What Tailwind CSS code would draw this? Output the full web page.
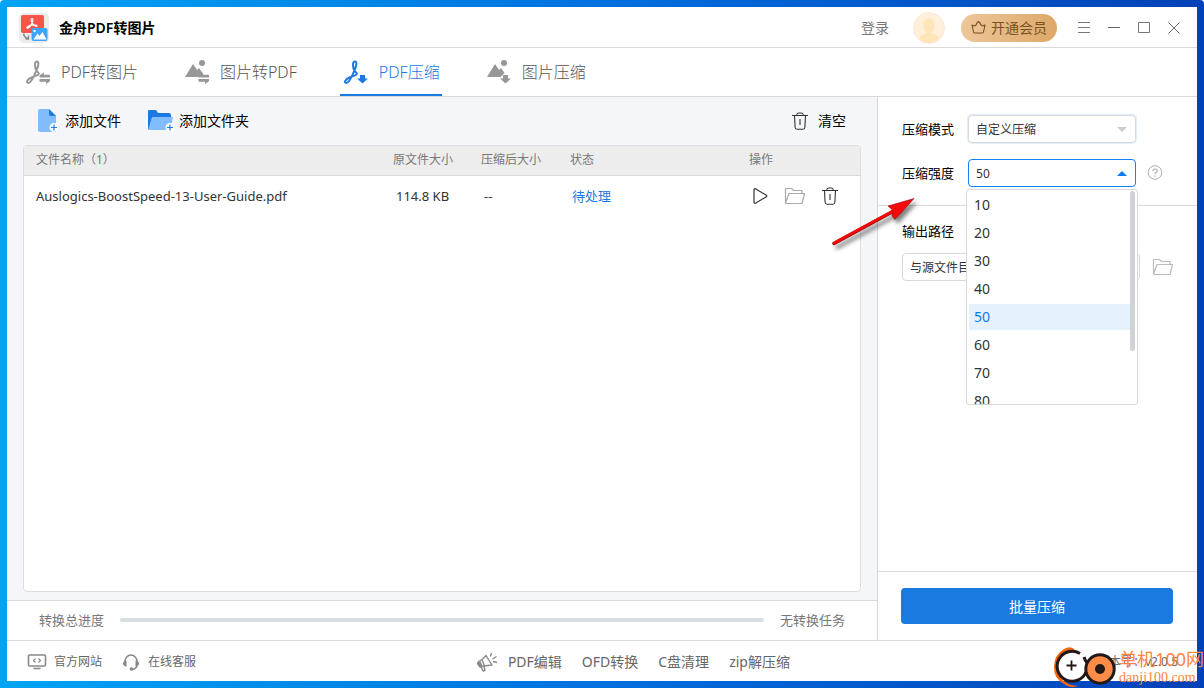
<!DOCTYPE html>
<html lang="zh-CN">
<head>
<meta charset="utf-8">
<title>金舟PDF转图片</title>
<meta name="viewport" content="width=device-width, initial-scale=1">
<script src="https://cdn.jsdelivr.net/npm/@tailwindcss/browser@4"></script>
</head>
<body class="bg-white font-['Noto_Sans','Noto_Sans_CJK_SC',sans-serif] text-[13px] leading-5 text-[#333]">
<svg class="hidden" aria-hidden="true">
  <symbol id="trash" viewBox="0 0 16 18"><path d="M0 3.500h16M4.500 3.500Q5 1 6.500 1h3q1.500 0 2 2.500M2.500 3.500l.6 11.700q.2 2 2 2h5.800q1.800 0 2-2l.6-11.700M8 7v6" fill="none" stroke="currentColor" stroke-width="1.100"/></symbol>
  <symbol id="folder" viewBox="0 0 22 18"><path d="M1.500 16V1.500h6l2 2h8.500V6M1.500 16l3.500-9.500h15.500l-2.500 10H2.500q-1 0-1-.8" fill="none" stroke="currentColor" stroke-width="1.200" stroke-linejoin="round"/></symbol>
  <symbol id="acrobat" viewBox="0 0 24 26"><path d="M11 2.500c2.200 0 1.500 4-.3 8.400C8.400 16.500 5 24 2.500 24c-3 0-1.500-3.800 3.500-5.800 3.200-1.200 6-1.700 7-3.200M11 2.500c-3 0-2.300 6.500-.3 9.500 1 1.500 2.300 2 2.300 3" fill="none" stroke="currentColor" stroke-width="2"/></symbol>
  <symbol id="photo" viewBox="0 0 24 26"><path d="M0 18L8 5l4.200 6 1.800-2 3.500 5-4 4z" fill="currentColor"/><circle cx="17" cy="4" r="3" fill="currentColor"/></symbol>
  <symbol id="swap" viewBox="0 0 24 26"><path d="M13.500 18.500v-2l4.500-3v2.200h6.500v2.800zM24.500 20v2L20 25v-2.300h-6.500V20z" fill="currentColor"/></symbol>
  <symbol id="down" viewBox="0 0 24 26"><path d="M16 16h5v3.500h3l-5.500 5-5.500-5h3z" fill="currentColor"/></symbol>
</svg>
<div class="relative flex min-h-screen flex-col rounded-t-[4px] bg-linear-to-r from-[#00a4f4] via-[#0070e0] to-[#0040b8] p-[7px]">
<div class="flex flex-1 flex-col bg-white">

  <header class="flex h-[41px] items-center border-b border-[#d9d9d9] pt-px pr-4 pl-3">
    <svg class="size-[30px]" viewBox="0 0 30 30"><rect width="30" height="30" rx="5" fill="#ececec"/><rect x="2" y="2" width="23" height="18" rx="2" fill="#f75549"/><path d="M13 5.500c1.800 0 .6 3.500-1 6.500-1 2-3 3.500-4 3s1.500-2.200 4.500-2.800 6 0 5.500 1-4-1.200-5-3.700-1.500-4 0-4z" fill="none" stroke="#fff" stroke-width="1.200"/><path d="M4.500 20.500q1 4.500 4.500 5M9.500 22.500v3.500H6.500" fill="none" stroke="#888" stroke-width="1.400"/><rect x="12.500" y="15" width="16" height="13" rx="2" fill="#3fa4fb"/><path d="M14.500 26.500l4-6 2 2.500 3-4 4 7.500z" fill="#fff"/><circle cx="15.500" cy="18" r="1.200" fill="#fff"/></svg>
    <h1 class="ml-[10px] text-sm font-semibold text-black">金舟PDF转图片</h1>
    <div class="ml-auto flex items-center">
      <a href="#" class="text-sm text-[#777]">登录</a>
      <svg class="ml-6 size-8" viewBox="0 0 32 32"><circle cx="16" cy="16" r="15.500" fill="#fff0d9" stroke="#fde6e0"/><ellipse cx="16" cy="13.500" rx="6" ry="7" fill="#ffe6ba"/><path d="M13.500 18h5v3l5 2q2.500 1 2.500 3.500Q22 31 16 31T6 26.500Q6 24 8.500 23l5-2z" fill="#ffe6ba"/></svg>
      <button class="ml-4 flex h-7 items-center gap-[5px] rounded-full bg-linear-to-r from-[#edc799] to-[#dda869] px-[10px] text-sm text-[#7a5220]">
        <svg class="size-[15px]" viewBox="0 0 15 15"><path d="M2.500 12L1 5q2.500 1.500 4 0 .5-2 2.500-3.500Q9.500 3 10 5q1.500 1.500 4 0l-1.500 7q-.2 1-1 1h-8q-.8 0-1-1z" fill="none" stroke="currentColor" stroke-width="1.100" stroke-linejoin="round"/></svg>开通会员</button>
      <button aria-label="菜单" class="ml-5 text-[#777]"><svg class="size-[14px]" viewBox="0 0 14 14"><path d="M1 1.500h12M1 6.500h12M1 11.500h12" stroke="currentColor"/></svg></button>
      <button aria-label="最小化" class="ml-4 text-[#666]"><svg class="size-[14px]" viewBox="0 0 14 14"><path d="M1 6.500h12" stroke="currentColor"/></svg></button>
      <button aria-label="最大化" class="ml-4 text-[#777]"><svg class="size-[14px]" viewBox="0 0 14 14"><path d="M1.500 1.500h11v10h-11z" fill="none" stroke="currentColor"/></svg></button>
      <button aria-label="关闭" class="ml-4 text-[#666]"><svg class="size-[14px]" viewBox="0 0 14 14"><path d="M1.500 1.500l11 11M12.500 1.500l-11 11" stroke="currentColor"/></svg></button>
    </div>
  </header>

  <nav class="flex h-[49px] gap-[41px] border-b border-[#d9d9d9] pl-[15px] text-base font-light text-[#555]">
    <a href="#" class="flex items-center gap-[11px] pr-[2px] pl-1"><svg class="h-[26px] w-6 text-[#979797]"><use href="#acrobat"/><use href="#swap"/></svg>PDF转图片</a>
    <a href="#" class="flex items-center gap-[11px] pr-[2px] pl-1"><svg class="h-[26px] w-6 text-[#979797]"><use href="#photo"/><use href="#swap"/></svg>图片转PDF</a>
    <a href="#" aria-current="page" class="flex items-center gap-[11px] border-b-2 border-[#1a7ae2] pt-[2px] pr-[2px] pl-1 text-[#1a7ae2]"><svg class="h-[26px] w-6"><use href="#acrobat"/><use href="#down"/></svg>PDF压缩</a>
    <a href="#" class="flex items-center gap-[11px] pr-[2px] pl-1"><svg class="h-[26px] w-6 text-[#979797]"><use href="#photo"/><use href="#down"/></svg>图片压缩</a>
  </nav>

  <div class="flex flex-1">
    <main class="flex flex-1 flex-col">
      <div class="flex flex-1 flex-col bg-[#f4f6fa] px-4 pb-2">
        <div class="flex h-12 items-center pr-[15px] pl-[14px] text-sm text-black">
          <button class="flex items-center gap-2"><svg class="h-6 w-5" viewBox="0 0 20 24"><path d="M3 0h9l7 7v16H3q-2 0-2-2V2q0-2 2-2z" fill="#80bcff"/><path d="M12 0l7 7h-5q-2 0-2-2z" fill="#1a7ae2"/><circle cx="17" cy="18.500" r="4.500" fill="#fff"/><path d="M14 18.500h6M17 15.500v6" stroke="#1a7ae2" stroke-width="1.200"/></svg>添加文件</button>
          <button class="ml-[26px] flex items-center gap-[5px]"><svg class="h-6 w-[27px]" viewBox="0 0 27 24"><path d="M1 2q0-1 1-1h7l2 3h11q2 0 2 2v14H1z" fill="#1a7ae2"/><path d="M5 8h21l-2.500 12q-.3 1-1.500 1H1z" fill="#80bcff"/><circle cx="23" cy="18.500" r="4.500" fill="#fff"/><path d="M20 18.500h6M23 15.500v6" stroke="#1a7ae2" stroke-width="1.200"/></svg>添加文件夹</button>
          <button class="ml-auto flex items-center gap-[10px]"><svg class="h-[18px] w-4 text-[#333]"><use href="#trash"/></svg>清空</button>
        </div>
        <div class="flex-1 rounded-[4px] border border-[#dcdfe2] bg-white">
          <table class="w-full table-fixed text-left">
            <thead class="text-xs text-[#777]">
              <tr class="h-[29px] border-b border-[#d9d9d9] bg-[#ededed]">
                <th class="pl-3 font-normal">文件名称（1）</th><th class="w-[88px] font-normal">原文件大小</th><th class="w-[89px] font-normal">压缩后大小</th><th class="w-[179px] font-normal">状态</th><th class="w-[111px] font-normal">操作</th>
              </tr>
            </thead>
            <tbody>
              <tr class="h-[41px]">
                <td class="pl-3">Auslogics-BoostSpeed-13-User-Guide.pdf</td><td class="pl-[3px]">114.8 KB</td><td class="pl-[3px]">--</td><td class="pl-[2px] text-[#1a7ae2]">待处理</td>
                <td><div class="flex items-center gap-4 pl-[3px]">
                  <button aria-label="开始"><svg class="h-[18px] w-4" viewBox="0 0 16 18"><path d="M2 3v12q0 2 1.800 1L14 10q1.700-1 0-2L3.800 2Q2 1 2 3z" fill="none" stroke="currentColor" stroke-width="1.200"/></svg></button>
                  <button aria-label="打开文件夹" class="text-[#aaa]"><svg class="h-[18px] w-[22px]"><use href="#folder"/></svg></button>
                  <button aria-label="删除"><svg class="h-[18px] w-4"><use href="#trash"/></svg></button>
                </div></td>
              </tr>
            </tbody>
          </table>
        </div>
      </div>
      <div class="flex h-10 items-center gap-4 border-t border-[#d9d9d9] pr-8 pb-[2px] pl-8 text-[#777]">
        <span id="total">转换总进度</span>
        <div role="progressbar" aria-labelledby="total" aria-valuenow="0" class="h-1 flex-1 rounded-full bg-[#d8dfe3]"></div>
        <span>无转换任务</span>
      </div>
    </main>

    <aside class="flex w-[320px] flex-col border-l border-[#d9d9d9]">
      <div class="flex flex-col gap-4 border-b border-[#d9d9d9] py-[18px] pl-6 text-black">
        <div class="flex items-center gap-[14px]">
          <label for="mode">压缩模式</label>
          <div class="relative">
            <select id="mode" class="h-7 w-[168px] appearance-none rounded-[4px] border border-[#d9d9d9] bg-white px-[7px] pt-[2px] text-xs text-[#333] ring-1 ring-[#e1effd]"><option>自定义压缩</option></select>
            <svg class="pointer-events-none absolute top-3 right-[9px] h-[5px] w-[10px]" viewBox="0 0 10 5"><path d="M0 0h10L5 5z" fill="#ccc"/></svg>
          </div>
        </div>
        <div class="flex items-center gap-[14px]">
          <label for="level">压缩强度</label>
          <div class="relative">
            <select id="level" class="block h-7 w-[168px] appearance-none rounded-[4px] border border-[#1283f5] bg-white px-[7px] pt-[2px] text-xs text-[#333]"><option>50</option></select>
            <svg class="pointer-events-none absolute top-3 right-[9px] h-[5px] w-[10px]" viewBox="0 0 10 5"><path d="M0 5h10L5 0z" fill="#0a7bf2"/></svg>
            <ul role="listbox" aria-label="压缩强度" class="absolute top-[30px] -left-[2px] z-10 h-[216px] w-[172px] overflow-hidden rounded-[3px] border border-[#d9d9d9] bg-white pt-px pr-[7px] pl-[2px] text-sm leading-7 text-[#333]">
              <li role="option" class="px-[5px]">10</li><li role="option" class="px-[5px]">20</li><li role="option" class="px-[5px]">30</li><li role="option" class="px-[5px]">40</li>
              <li role="option" aria-selected="true" class="rounded-[2px] border-y border-white bg-[#e6f1fe] px-[5px] leading-[26px] text-[#0a7bf2]">50</li>
              <li role="option" class="px-[5px]">60</li><li role="option" class="px-[5px]">70</li><li role="option" class="px-[5px]">80</li>
              <li aria-hidden="true" class="absolute top-px right-[2px] h-[160px] w-[5px] rounded-full bg-[#cfd3d7]"></li>
            </ul>
          </div>
          <button aria-label="帮助" class="-ml-[3px] text-[#aaa]"><svg class="size-4" viewBox="0 0 16 16"><circle cx="8" cy="7.500" r="6.800" fill="none" stroke="currentColor"/><path d="M5.800 6q0-2 2.200-2t2.200 1.800q0 1-1.200 1.700Q8 8.100 8 9.300M8 10.500v1.200" fill="none" stroke="currentColor" stroke-width="1.100"/></svg></button>
        </div>
      </div>
      <div class="flex flex-1 flex-col gap-3 pt-[15px] pl-6 text-black">
        <label for="path">输出路径</label>
        <div class="flex items-center gap-3">
          <select id="path" class="h-7 w-[238px] appearance-none rounded-[4px] border border-[#d9d9d9] bg-white px-[7px] pt-[2px] text-xs text-[#333]"><option>与源文件目录相同</option></select>
          <button aria-label="选择文件夹" class="text-[#bbb]"><svg class="h-[18px] w-[22px]"><use href="#folder"/></svg></button>
        </div>
      </div>
      <div class="border-t border-[#d9d9d9] pt-4 pr-6 pb-4 pl-[23px]">
        <button class="h-9 w-full rounded-[4px] bg-[#1a7ae2] pt-px text-sm text-white">批量压缩</button>
      </div>
    </aside>
  </div>

  <footer class="grid h-[41px] grid-cols-[39%_1fr_auto] items-center border-t border-[#d9d9d9] pt-px pr-[19px] pl-5 text-[#666]">
    <div class="flex items-center gap-5 text-xs">
      <a href="#" class="flex items-center gap-[7px]"><svg class="h-[18px] w-5" viewBox="0 0 20 18"><path d="M2.500 2h15q1 0 1 1v9q0 1-1 1h-15q-1 0-1-1V3q0-1 1-1zM6.500 15.500h7" fill="none" stroke="#888" stroke-width="1.600"/><path d="M8.500 5.500l-2 2 2 2M11.500 5.500l2 2-2 2" fill="none" stroke="#888" stroke-width="1.200"/></svg>官方网站</a>
      <a href="#" class="flex items-center gap-2"><svg class="size-[18px]" viewBox="0 0 18 18"><path d="M3 8.500a6 6.500 0 0 1 12 0M15 13q-1 3-5 3.300" fill="none" stroke="#888" stroke-width="1.500"/><path d="M4.500 7.500v6Q1 13 1 10.500t3.500-3zM13.500 7.500v6q3.500-.5 3.500-3t-3.500-3z" fill="#888"/><circle cx="9.500" cy="16" r="1.800" fill="#888"/></svg>在线客服</a>
    </div>
    <div class="flex items-center gap-5 text-sm">
      <a href="#" class="flex items-center gap-[10px]"><svg class="h-5 w-[22px]" viewBox="0 0 22 20"><path d="M10 3.500l6 9.500-8 1-4 1-2.500-3.500 1-2L6 7.500zM6 7.500L8.500 14M5 15l2 4 2-.5-1-4" fill="none" stroke="#888" stroke-width="1.400" stroke-linejoin="round"/><path d="M1.500 11l3-2 2 5-3 1z" fill="#888"/><path d="M14.500 4.500L15.500 1M16.500 7l4-2.500M17 9.500l4 1" stroke="#888" stroke-width="1.400"/></svg>PDF编辑</a>
      <a href="#">OFD转换</a><a href="#">C盘清理</a><a href="#">zip解压缩</a>
    </div>
    <span class="text-xs">版本号：v2.0.5</span>
  </footer>
</div>

<!-- Annotation arrow -->
<svg class="pointer-events-none absolute top-[190px] right-[280px] h-[64px] w-[96px] drop-shadow-[3px_4px_2px_rgba(0,0,0,0.5)]" viewBox="0 0 96 64"><path d="M6 53.500L64 22" stroke="#8b1010" stroke-width="3.500" stroke-linecap="round"/><path d="M6 53L66 20.500" stroke="#f80808" stroke-width="2.600" stroke-linecap="round"/><path d="M86 8.500L60 16l4.500 4-.5 6L67 29.500z" fill="#f80808" stroke="#8b1010" stroke-width=".6"/></svg>

<!-- Site watermark -->
<div class="pointer-events-none absolute right-0 bottom-0 flex items-center gap-[3px] text-[#ff8540]">
  <svg class="h-[42px] w-[63px]" viewBox="0 0 63 42"><path d="M22 4Q18-1 11 3 1 9 1 21t10 17q6 5 14 2-12-1-17-8-7-12 0-22 4-6 14-6z" fill="#f5650a"/><circle cx="19" cy="20" r="15" fill="#fff"/><path d="M27 7.500A15 15 0 1 0 33 26M31 11q2 6 5 7t5-7" fill="none" stroke="#231815" stroke-width="3"/><path d="M13.500 19.500h10M18.500 14.500v10" stroke="#231815" stroke-width="1.800"/><circle cx="47" cy="23" r="14.200" fill="#ff8d48" stroke="#231815" stroke-width="3"/><circle cx="47" cy="23" r="5" fill="#231815"/></svg>
  <div class="flex flex-col">
    <span class="text-[18px] leading-[22px]">单机100网</span>
    <span class="font-['Liberation_Serif',serif] text-sm leading-4">danji100.com</span>
  </div>
</div>
</div>
</body>
</html>
